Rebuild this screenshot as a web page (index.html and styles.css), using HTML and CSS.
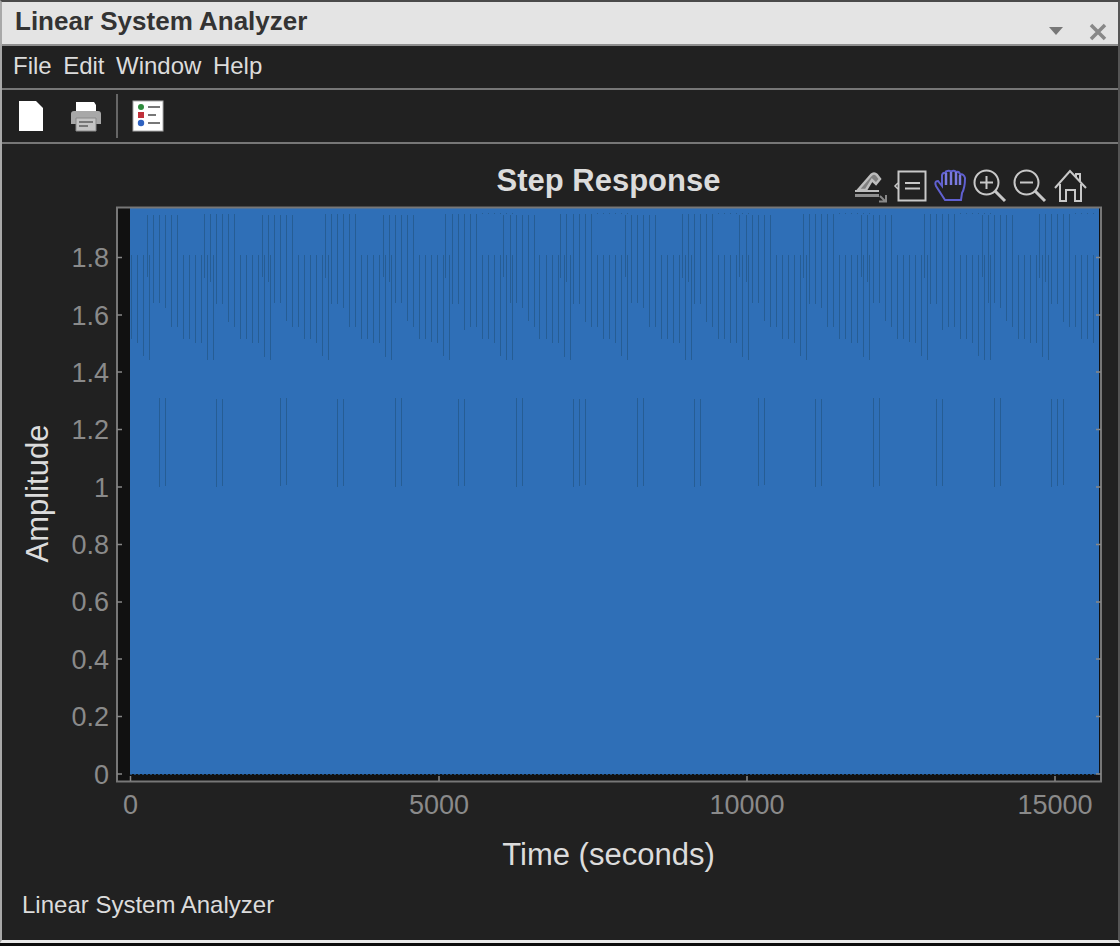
FILE: index.html
```html
<!DOCTYPE html>
<html lang="en">
<head>
  <meta charset="UTF-8">
  <title>Linear System Analyzer</title>
  <link rel="stylesheet" href="styles.css">
</head>
<body>
<div class="window">

  <div class="titlebar">
    <span class="title">Linear System Analyzer</span>
    <svg class="win-btn arrow" width="16" height="10" viewBox="0 0 16 10"><path d="M1 1H15L8 9Z"/></svg>
    <svg class="win-btn close" width="18" height="18" viewBox="0 0 18 18"><path d="M2 2L16 16M16 2L2 16"/></svg>
  </div>

  <div class="menubar">
    <span>File</span>
    <span>Edit</span>
    <span>Window</span>
    <span>Help</span>
  </div>

  <div class="toolbar">
    <svg class="tool tool-new" width="26" height="32" viewBox="0 0 26 32"><path d="M1 1H18L25 8V31H1Z" fill="#fff"/></svg>
    <svg class="tool tool-print" width="32" height="32" viewBox="0 0 32 32">
      <path d="M6 2H24L26 5V12H6Z" fill="#fff"/>
      <path d="M1 14Q1 11 4 11H28Q31 11 31 14V24H1Z" fill="#a8a8a8"/>
      <path d="M6 18H26V31H6Z" fill="#c4c4c4" stroke="#8a8a8a"/>
      <path d="M9 22H23M9 26H18" stroke="#777" stroke-width="2"/>
    </svg>
    <span class="tool-sep"></span>
    <svg class="tool tool-list" width="32" height="32" viewBox="0 0 32 32">
      <rect x="1" y="1" width="30" height="30" fill="#fff" stroke="#aaa"/>
      <circle cx="9" cy="7" r="3" fill="#2e8b3d"/>
      <rect x="6" y="12" width="6" height="6" fill="#c0303a"/>
      <circle cx="9" cy="23" r="3.200" fill="#2f62c0"/>
      <path d="M16 7H28M16 15H24M16 23H28" stroke="#777" stroke-width="2"/>
    </svg>
  </div>

  <svg class="plot" width="1116" height="740" viewBox="2 144 1116 740">
    <text class="plot-title" x="608.500" y="191" text-anchor="middle">Step Response</text>

    <g class="plot-tools">
      <g fill="none" stroke="#c8c8c8" stroke-width="2">
        <path d="M858 190L871 175Q874 172 877 175L880 179L876 184L872 180L866 190Z" fill="#808080" stroke="#bdbdbd" stroke-width="2.500"/>
        <path d="M855 191H879" stroke="#bdbdbd"/>
        <path d="M855 195.500H879" stroke="#8e8e8e" stroke-width="3"/>
        <path d="M880 196L885 201M879 201.500H886V195" stroke="#888"/>
        <rect x="898.500" y="171.500" width="27" height="29"/>
        <path d="M905 183H920M905 188.500H920"/>
        <path d="M898 183L895 186L898 189" stroke-width="1.500"/>
        <circle cx="986.500" cy="182.500" r="12"/>
        <path d="M986.500 176V189M980 182.500H993"/>
        <path d="M995 191L1005 201" stroke-width="3"/>
        <circle cx="1026.500" cy="182.500" r="12"/>
        <path d="M1020 182.500H1033"/>
        <path d="M1035 191L1045 201" stroke-width="3"/>
        <path d="M1055 188L1070 171L1086 188M1060 184V201H1066V190H1075V201H1081V184M1076 177V174H1080V181"/>
      </g>
      <path d="M945 200L936 186Q934 181 938 181L942 186V175Q943 172 946 173V171.500Q949 170 951 171.500Q954 170 956 172Q959 171 960 174Q964 174 965 178Q965 188 962 193L961 200Z" fill="#212121" stroke="#6060d0" stroke-width="2"/>
      <path d="M946 173V185M951 172V185M956 172V185M960 175V185" fill="none" stroke="#7a7ae0" stroke-width="2.500"/>
    </g>

    <!-- axes -->
    <rect x="117" y="208" width="984" height="573" fill="#111"/>
    <rect x="130" y="208" width="969" height="566" fill="#2f6fb7"/>
    <path class="bottom-dots" d="M130 774.500H1099"/>

    <!-- spikes, noted down in groups along the x axis -->
    <g class="spikes" transform="translate(100 200) scale(.33333)">
      <path d="M142 45V230M160 45V308M178 45V308M196 45V325M214 45V380M232 45V380"/>
      <path d="M94 165V417M112 165V429M130 165V467M148 165V479"/>
      <path d="M250 165V417M268 165V417M286 165V429M304 165V429M322 165V479M340 165V479"/>
      <path d="M313 42V234M331 42V245M349 42V311M367 42V311M385 42V365M403 42V380"/>
      <path d="M421 165V417M439 165V417M457 165V429M475 165V429M493 165V470M511 165V479"/>
      <path d="M487 45V230M505 45V245M523 45V308M541 45V308M559 45V362M577 45V380"/>
      <path d="M595 165V380M613 165V417M631 165V417M649 165V429M667 165V467M685 165V479"/>
      <path d="M676 42V234M694 42V311M712 42V311M730 42V325M748 42V380M766 42V380"/>
      <path d="M784 165V417M802 165V417M820 165V429M838 165V429M856 165V470M874 165V479"/>
      <path d="M850 45V230M868 45V245M886 45V308M904 45V308M922 45V362M940 45V380"/>
      <path d="M958 165V417M976 165V417M994 165V425M1012 165V429"/>
      <path d="M178 595V860M196 595V857M349 598V860M367 598V857M541 595V857M559 595V854M712 598V860M730 598V857M886 595V860M904 595V857"/>
    </g>
    <g class="spikes" transform="translate(440 200) scale(.33333)">
      <path d="M10 165V467M28 165V479"/>
      <path d="M18 42V234M37 42V311M55 42V311M73 42V390M91 42V380M109 42V380"/>
      <path d="M127 165V417M145 165V417M163 165V429M181 165V467M199 165V479M217 165V479"/>
      <path d="M192 45V230M211 45V308M229 45V308M247 45V325M265 45V362M283 45V380"/>
      <path d="M300 165V417M319 165V417M337 165V429M355 165V429M373 165V470M391 165V479"/>
      <path d="M363 42V234M381 42V245M400 42V311M418 42V311M436 42V365M454 42V380"/>
      <path d="M472 165V380M490 165V417M508 165V417M526 165V429M544 165V467M562 165V479"/>
      <path d="M556 45V230M574 45V308M592 45V308M610 45V325M628 45V380M646 45V380"/>
      <path d="M664 165V417M682 165V417M700 165V429M718 165V429M736 165V479M754 165V479"/>
      <path d="M727 42V234M745 42V245M763 42V311M781 42V311M799 42V365M817 42V380"/>
      <path d="M836 165V417M853 165V417M871 165V429M889 165V429M907 165V470M925 165V479"/>
      <path d="M900 45V230M919 45V245M937 45V308M955 45V308M973 45V362"/>
      <path d="M55 598V857M73 598V857M229 595V860M247 595V857M400 598V860M418 598V857M436 598V854M592 595V860M610 595V857M763 598V860M781 598V857M955 595V857M973 595V854"/>
      <path d="M127 39V42M145 39V42M163 39V42M181 39V42M199 39V42M217 39V42M472 39V42M490 39V42M508 39V42M526 39V42M544 39V42M562 39V42M836 39V42M853 39V42M871 39V42M889 39V42M907 39V42M925 39V42"/>
    </g>
    <g class="spikes" transform="translate(770 200) scale(.33333)">
      <path d="M1 45V380M19 165V380"/>
      <path d="M37 165V417M55 165V417M73 165V429M91 165V467M109 165V479"/>
      <path d="M100 42V234M118 42V311M136 42V311M154 42V325M172 42V380M190 42V380"/>
      <path d="M208 165V417M226 165V417M244 165V429M262 165V429M280 165V470M298 165V479"/>
      <path d="M274 45V230M292 45V245M310 45V308M328 45V308M346 45V362M364 45V380"/>
      <path d="M382 165V417M400 165V417M418 165V425M436 165V429M454 165V467M472 165V479"/>
      <path d="M463 42V234M481 42V311M499 42V311M517 42V390M535 42V380M553 42V380"/>
      <path d="M571 165V417M589 165V417M607 165V429M625 165V467M643 165V479M661 165V479"/>
      <path d="M637 45V230M655 45V308M673 45V308M691 45V325M709 45V362M727 45V380"/>
      <path d="M745 165V417M763 165V417M781 165V429M799 165V429M817 165V470M835 165V479"/>
      <path d="M808 42V234M826 42V245M844 42V311M862 42V311M880 42V365M898 42V380"/>
      <path d="M916 165V380M934 165V417M952 165V417M970 165V429"/>
      <path d="M136 598V860M154 598V857M310 595V860M328 595V857M499 598V857M517 598V857M673 595V860M691 595V857M844 598V860M862 598V857M880 598V854"/>
      <path d="M208 39V42M226 39V42M244 39V42M262 39V42M280 39V42M298 39V42M571 39V42M589 39V42M607 39V42M625 39V42M643 39V42M661 39V42M916 39V42M934 39V42M952 39V42M970 39V42"/>
    </g>

    <path class="axis" d="M117 781V207.500H1101V781.500H116"/>
    <path class="tick" d="M117 257.500H122M117 315H122M117 372H122M117 429.500H122M117 487H122M117 544.500H122M117 602H122M117 659H122M117 716.500H122M117 774H122"/>
    <path class="tick" d="M1101 257.500H1096M1101 315H1096M1101 372H1096M1101 429.500H1096M1101 487H1096M1101 544.500H1096M1101 602H1096M1101 659H1096M1101 716.500H1096M1101 774H1096"/>
    <path class="tick" d="M130.500 781V776M439 781V776M747 781V776M1055 781V776"/>

    <g class="tick-labels" text-anchor="end">
      <text x="109" y="267">1.8</text>
      <text x="109" y="324.500">1.6</text>
      <text x="109" y="381.500">1.4</text>
      <text x="109" y="439">1.2</text>
      <text x="109" y="496.500">1</text>
      <text x="109" y="554">0.8</text>
      <text x="109" y="611">0.6</text>
      <text x="109" y="668.500">0.4</text>
      <text x="109" y="726">0.2</text>
      <text x="109" y="783.500">0</text>
    </g>
    <g class="tick-labels" text-anchor="middle">
      <text x="130.500" y="814">0</text>
      <text x="439" y="814">5000</text>
      <text x="747" y="814">10000</text>
      <text x="1055" y="814">15000</text>
    </g>

    <text class="axis-label" x="608.500" y="865" text-anchor="middle">Time (seconds)</text>
    <text class="axis-label" transform="translate(48 493.500) rotate(-90)" text-anchor="middle">Amplitude</text>
  </svg>

  <div class="status">Linear System Analyzer</div>
</div>
</body>
</html>
```

FILE: styles.css
```css
html, body {
  margin: 0;
  padding: 0;
  background: #0c0c0c;
}
body {
  width: 1120px;
  height: 946px;
  overflow: hidden;
  font-family: "Liberation Sans", Arial, sans-serif;
}
.window {
  box-sizing: border-box;
  width: 1120px;
  height: 943px;
  display: flex;
  flex-direction: column;
  background: #212121;
  border-top: 2px solid #4a4a4a;
  border-left: 2px solid #a8a8a8;
  border-right: 2px solid #555;
  border-bottom: 3px solid;
  border-bottom-color: #e8e8e8;
}
.titlebar {
  box-sizing: content-box;
  height: 39px;
  flex: none;
  display: flex;
  align-items: center;
  padding: 0 0 3px 13px;
  background: #e4e4e4;
  border-bottom: 2px solid #8e8e8e;
  position: relative;
}
.title {
  font-size: 26px;
  font-weight: bold;
  color: #333;
}
.win-btn {
  position: absolute;
}
.arrow {
  left: 1046px;
  top: 24px;
  fill: #777;
}
.close {
  left: 1087px;
  top: 21px;
  fill: none;
  stroke: #888;
  stroke-width: 3.5;
}
.menubar {
  height: 40px;
  flex: none;
  display: flex;
  align-items: center;
  gap: 11.500px;
  padding: 0 0 2px 11px;
  border-bottom: 2px solid #777;
  font-size: 24px;
  color: #dcdcdc;
}
.toolbar {
  height: 52px;
  flex: none;
  display: flex;
  align-items: center;
  padding-left: 16px;
  border-bottom: 2px solid #777;
}
.tool {
  flex: none;
}
.tool-print {
  margin-left: 26px;
}
.tool-sep {
  width: 2px;
  height: 44px;
  margin: 0 14px 0 14px;
  background: #666;
}
.plot {
  display: block;
  flex: none;
  font-family: "Liberation Sans", Arial, sans-serif;
}
.plot-title {
  font-size: 31px;
  font-weight: bold;
  fill: #dcdcdc;
}
.bottom-dots {
  stroke: #1f4a75;
  stroke-width: 1;
  stroke-dasharray: 2 2;
}
.spikes {
  fill: none;
  stroke: #265d94;
  stroke-width: 3;
  shape-rendering: crispEdges;
}
.axis {
  fill: none;
  stroke: #777;
  stroke-width: 2;
}
.tick {
  fill: none;
  stroke: #888;
  stroke-width: 1.5;
}
.tick-labels {
  font-size: 27px;
  fill: #8a8a8a;
}
.axis-label {
  font-size: 31px;
  fill: #dcdcdc;
}
.status {
  padding: 7px 0 0 20px;
  font-size: 24px;
  color: #dcdcdc;
}
```
